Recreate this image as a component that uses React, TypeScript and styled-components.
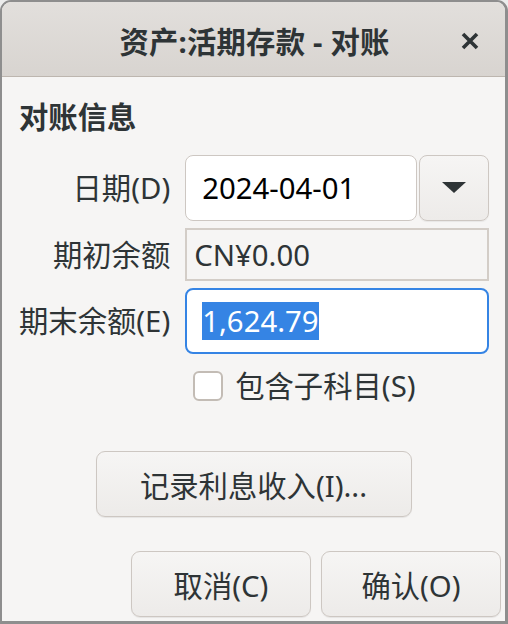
import React from "react";
import styled, { createGlobalStyle } from "styled-components";

const Global = createGlobalStyle`
  html, body { margin: 0; padding: 0; }
  body {
    background: #ececec;
    font-family: "Noto Sans", "Noto Sans CJK SC", sans-serif;
    color: #2e3436;
  }
  * { box-sizing: border-box; }
`;

const Window = styled.div`
  width: 508px;
  height: 624px;
  display: flex;
  flex-direction: column;
  border: 2px solid #8e8e8e;
  border-right-width: 3px;
  border-bottom-width: 3px;
  border-radius: 11px 11px 0 0;
  overflow: hidden;
  background: #f6f5f4;
`;

const HeaderBar = styled.div`
  height: 75px;
  flex: none;
  position: relative;
  display: flex;
  align-items: center;
  justify-content: center;
  background: linear-gradient(#e2dfdc, #d8d4d0);
  border-bottom: 1px solid #bdb6af;
`;

const Title = styled.div`
  font-size: 29.33px;
  font-weight: 700;
  letter-spacing: 0.2px;
  margin-top: 2px;
  margin-left: 2px;
`;

const CloseButton = styled.div`
  position: absolute;
  right: 26px;
  top: 30px;
  width: 18px;
  height: 18px;
  display: flex;
`;

const Body = styled.div`
  flex: 1;
  display: flex;
  flex-direction: column;
  padding: 20px 4px 4px 17px;
`;

const Heading = styled.div`
  font-size: 29.33px;
  font-weight: 700;
  line-height: 40px;
  margin-bottom: 18px;
`;

const Form = styled.div`
  display: grid;
  grid-template-columns: max-content 1fr;
  column-gap: 15px;
  row-gap: 7px;
  padding-right: 12px;
  align-items: center;
`;

const Label = styled.div`
  font-size: 29.33px;
  line-height: 40px;
  text-align: right;
`;

const DateField = styled.div`
  display: flex;
  gap: 2px;
  height: 66px;
`;

const Entry = styled.div<{ $focused?: boolean }>`
  flex: 1;
  height: 66px;
  display: flex;
  align-items: center;
  background: #ffffff;
  border: ${(p) => (p.$focused ? "2px solid #3584e4" : "1.5px solid #cdc7c2")};
  border-radius: 8px;
  padding: 0 ${(p) => (p.$focused ? "15px" : "16px")};
  font-size: 29.33px;
  color: #000;
`;

const Selected = styled.span`
  background: #3584e4;
  color: #ffffff;
  line-height: 38px;
`;

const DropButton = styled.div`
  width: 70px;
  height: 66px;
  display: flex;
  align-items: center;
  justify-content: center;
  border: 1.5px solid #cdc7c2;
  border-radius: 8px;
  background: linear-gradient(#f6f5f4, #edebe9);
  box-shadow: 0 1px 1px rgba(0, 0, 0, 0.06);
`;

const ReadOnlyField = styled.div`
  height: 53px;
  display: flex;
  align-items: center;
  border: 2px solid #d3cdc7;
  padding: 0 7px;
  font-size: 29.33px;
  color: #2e3436;
`;

const CheckRow = styled.label`
  grid-column: 2;
  display: flex;
  align-items: center;
  gap: 12px;
  padding-left: 8px;
  margin-top: 5px;
  font-size: 29.33px;
  line-height: 40px;
`;

const CheckBox = styled.span`
  width: 30px;
  height: 30px;
  flex: none;
  border: 2px solid #c3bcb5;
  border-radius: 6px;
  background: #ffffff;
`;

const CenterRow = styled.div`
  display: flex;
  justify-content: center;
  margin-top: 45px;
  padding-right: 13px;
`;

const Button = styled.div<{ $width?: number }>`
  height: 66px;
  ${(p) => (p.$width ? `width: ${p.$width}px;` : "")}
  display: flex;
  align-items: center;
  justify-content: center;
  border: 1.5px solid #cdc7c2;
  border-radius: 9px;
  background: linear-gradient(#f6f5f4, #edebe9);
  box-shadow: 0 1px 1px rgba(0, 0, 0, 0.07);
  font-size: 29.33px;
  color: #2e3436;
`;

const ActionRow = styled.div`
  display: flex;
  justify-content: flex-end;
  gap: 10px;
  margin-top: auto;
`;

export default function App() {
  return (
    <>
      <Global />
      <Window>
        <HeaderBar>
          <Title>资产:活期存款 - 对账</Title>
          <CloseButton>
            <svg width="18" height="18" viewBox="0 0 18 18">
              <path d="M2 2 L16 16 M16 2 L2 16" stroke="#2e3436" strokeWidth="3.6" strokeLinecap="butt" />
            </svg>
          </CloseButton>
        </HeaderBar>
        <Body>
          <Heading>对账信息</Heading>
          <Form>
            <Label>日期(D)</Label>
            <DateField>
              <Entry>2024-04-01</Entry>
              <DropButton>
                <svg width="24" height="12" viewBox="0 0 24 12">
                  <path d="M0 0 H24 L12 11 Z" fill="#2e3436" />
                </svg>
              </DropButton>
            </DateField>
            <Label>期初余额</Label>
            <ReadOnlyField>CN¥0.00</ReadOnlyField>
            <Label>期末余额(E)</Label>
            <Entry $focused>
              <Selected>1,624.79</Selected>
            </Entry>
            <CheckRow>
              <CheckBox />
              包含子科目(S)
            </CheckRow>
          </Form>
          <CenterRow>
            <Button $width={316}>记录利息收入(I)...</Button>
          </CenterRow>
          <ActionRow>
            <Button $width={180}>取消(C)</Button>
            <Button $width={180}>确认(O)</Button>
          </ActionRow>
        </Body>
      </Window>
    </>
  );
}
